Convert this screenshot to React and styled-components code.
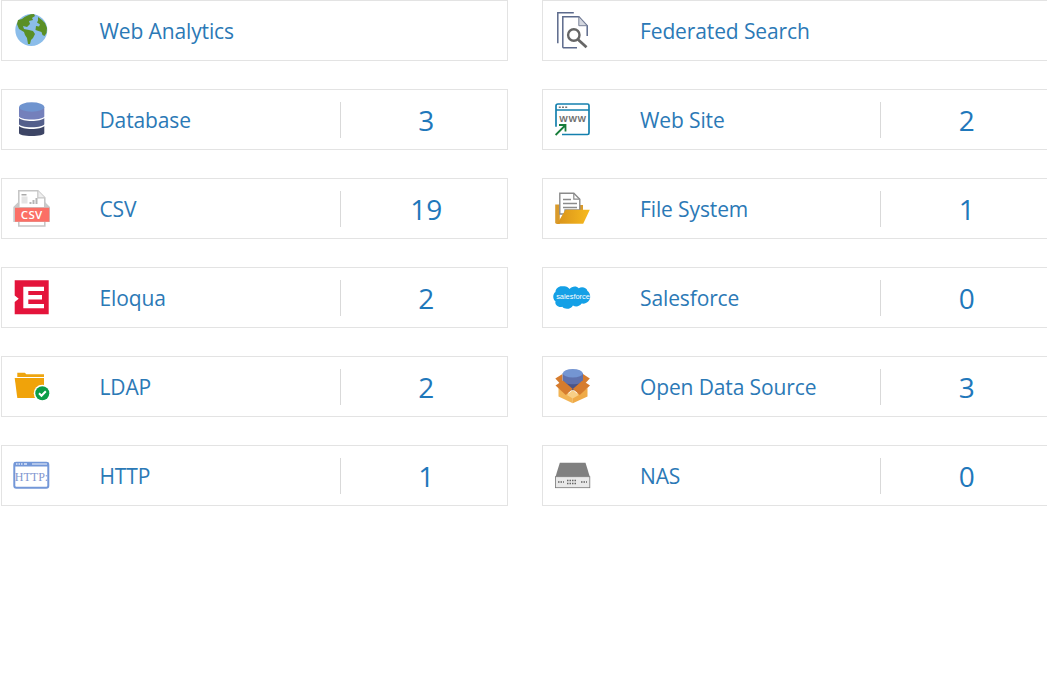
import React from "react";
import styled, { createGlobalStyle } from "styled-components";

const GlobalStyle = createGlobalStyle`
  html, body {
    margin: 0;
    padding: 0;
    height: 100%;
    background: #fff;
    overflow: hidden;
  }
`;

const Page = styled.div`
  width: 1047px;
  height: 700px;
  overflow: hidden;
  font-family: "Open Sans", "Noto Sans", sans-serif;
`;

const Grid = styled.div`
  display: grid;
  grid-template-columns: 507px 507px;
  grid-auto-rows: 61px;
  column-gap: 33.5px;
  row-gap: 28px;
  padding-left: 1px;
  width: 1048px;
`;

const Card = styled.div`
  display: flex;
  align-items: center;
  box-sizing: border-box;
  border: 1px solid #e3e3e3;
  background: #fff;
`;

const IconSlot = styled.div`
  flex: 0 0 97.5px;
  display: flex;
  align-items: center;
  padding-left: 12px;
  box-sizing: border-box;
  height: 100%;
  svg {
    display: block;
    margin-top: -1px;
    overflow: visible;
  }
`;

const Label = styled.div`
  flex: 0 0 240px;
  font-size: 21px;
  letter-spacing: -0.12px;
  color: #2b79b6;
`;

const Count = styled.div`
  flex: 1;
  height: 36px;
  line-height: 36px;
  border-left: 1px solid #d9d9d9;
  text-align: center;
  padding-left: 5px;
  font-size: 28px;
  color: #1f78bb;
`;

const Svg = ({ children }) => (
  <svg width="36" height="36" viewBox="0 0 36 36">
    {children}
  </svg>
);

const Globe = () => (
  <Svg>
    <circle cx="17.300" cy="18" r="16" fill="#8bbdea" />
    <path d="M8 7c3-3 8-5 12-5l1 2-3 2 1 2-4 1 1 3-3 3-4-1 1 3 5 1 4 1 2 3-2 4-2 2-1 4-2 0-1-6-2-3-1-3-5-3-2-5 1-4z" fill="#5a8f25" />
    <path d="M24 5l4 3 3 3 2 5-.5 5-2 3-2-1-1-3-3-1-3-1 .5-4 3 .5 1-2-3-2 1-2z" fill="#5a8f25" />
  </Svg>
);

const Database = () => (
  <Svg>
    <path d="M5 6v9.500c0 1.500 5.500 3 12.700 3s12.600-1.500 12.600-3V6z" fill="#7480bb" />
    <ellipse cx="17.700" cy="6" rx="12.600" ry="4.700" fill="#6f94cf" />
    <path d="M5 17v6c0 1.800 5.500 3.300 12.700 3.300s12.600-1.500 12.600-3.300v-6c-2 1.800-6.500 3-12.600 3S7 18.800 5 17z" fill="#545f8b" />
    <path d="M5 25v7c0 1.800 5.500 3 12.700 3s12.600-1.200 12.600-3v-7c-2 1.800-6.500 3-12.600 3S7 26.800 5 25z" fill="#3d4565" />
  </Svg>
);

const Csv = () => (
  <Svg>
    <path d="M4.800 17V.8h19l7 7V17M4.800 31v5h26v-5" fill="#fff" stroke="#c6c6c6" strokeWidth="1.600" />
    <path d="M23.800.8v7h7" fill="#eee" stroke="#c6c6c6" strokeWidth="1.200" />
    <rect x="7.500" y="4" width="5" height="1.500" fill="#aaa" />
    <rect x="7.500" y="6.500" width="6" height="7" fill="#e4e4e4" />
    <path d="M15.500 14v-2h2v2zm3 0v-4h2v4zm3 0v-6h2v6z" fill="#b5b5b5" />
    <path d="M-.7 17l5-5v5zM36 17l-5-5v5z" fill="#c9c9c9" />
    <path d="M-.7 17H36v15H-.7z" fill="#c9c9c9" />
    <path d="M1 17.700h34.300v14H1z" fill="#fb6f66" />
    <text x="17.700" y="29" textAnchor="middle" fontFamily="Open Sans, sans-serif" fontWeight="600" fontSize="11.500" letterSpacing="0.3" fill="#fff">CSV</text>
  </Svg>
);

const Eloqua = () => (
  <Svg>
    <path d="M.7 1.300h34v34H.7V23l4-3.300-4-3.300z" fill="#e4143b" />
    <path d="M9.300 7.700H30V12H14.300v4H28v4.500H14.300v4.500H30v4.300H9.300z" fill="#fff" />
  </Svg>
);

const FolderCheck = () => (
  <Svg>
    <path d="M3.300 9V4.700h7.500l1.500 1.500H30V9z" fill="#eea50f" />
    <path d="M.7 10H30v20H3.300z" fill="#f0a30a" />
    <circle cx="28.300" cy="25.300" r="8.500" fill="#fff" />
    <circle cx="28.300" cy="25.300" r="7" fill="#0b9d47" />
    <path d="M25 25.300l2.500 2.500 4.300-4.500" fill="none" stroke="#fff" strokeWidth="2" />
  </Svg>
);

const Http = () => (
  <Svg>
    <rect x="0.300" y="5.700" width="34" height="25" rx="2" fill="#fff" stroke="#7397d8" strokeWidth="2" />
    <path d="M0 5.500h34.500v4H0z" fill="#7397d8" />
    <path d="M2 7h1.500M4.500 7H6M7 7h1.500M10 7h3" stroke="#dfe7f7" strokeWidth="1.500" />
    <path d="M18 7h15" stroke="#c6d4f0" strokeWidth="1.500" />
    <text x="17.500" y="23.500" textAnchor="middle" fontFamily="Liberation Serif, serif" fontSize="12" fill="#7f96cf">HTTP:</text>
  </Svg>
);

const Federated = () => (
  <Svg>
    <path d="M18.800.8H2.800v30.500" fill="none" stroke="#5c6a8c" strokeWidth="1.500" />
    <path d="M7.800 35.800V4.700h16l8.400 9V24M7.800 35.800H22" fill="none" stroke="#5c6a8c" strokeWidth="1.500" />
    <path d="M23.800 4.700v9h8.400z" fill="#d4d7df" stroke="#7a8299" strokeWidth="1" />
    <circle cx="18.800" cy="23" r="5.700" fill="#fff" stroke="#666" strokeWidth="2.400" />
    <path d="M23 27.500l8.500 7.800" stroke="#666" strokeWidth="2.800" />
  </Svg>
);

const WebSite = () => (
  <Svg>
    <path d="M1 25.700V5a2 2 0 0 1 2-2h29.500a1.500 1.500 0 0 1 1.500 1.500V32a1.500 1.500 0 0 1-1.500 1.500H7" fill="none" stroke="#1480ae" strokeWidth="1.700" />
    <path d="M1 9h33" stroke="#1480ae" strokeWidth="1.500" />
    <path d="M3.800 6.300h2M7 6.300h2M10.200 6.300h2" stroke="#777" strokeWidth="1.600" />
    <text x="18" y="20.700" textAnchor="middle" fontFamily="Liberation Sans, sans-serif" fontWeight="700" fontSize="9" letterSpacing="0.6" fill="#707070">WWW</text>
    <path d="M.6 34l9.500-9.500M4 24h6.500v6.500" fill="none" stroke="#177d3a" strokeWidth="1.800" />
  </Svg>
);

const FileFolder = () => (
  <Svg>
    <defs>
      <linearGradient id="folderFront" x1="0" x2="1" y1="0" y2="0">
        <stop offset="0" stopColor="#d9931b" />
        <stop offset="1" stopColor="#f7ba1e" />
      </linearGradient>
    </defs>
    <path d="M.2 14.500h4.600V34H2a1.800 1.800 0 0 1-1.800-1.800z" fill="#d99a2b" />
    <path d="M24 15h4v6h-4z" fill="#d99a2b" />
    <path d="M4.800 24V3.200h14l6 6V20H10v4z" fill="#fff" stroke="#8b8b8b" strokeWidth="1.400" />
    <path d="M18.800 3.200v6h6" fill="none" stroke="#8b8b8b" strokeWidth="1.200" />
    <path d="M8 9.500h8M8 13.500h14M8 17.500h14" stroke="#8b8b8b" strokeWidth="1.400" />
    <path d="M10.500 19.700h24.300l-6.600 14H2.200z" fill="url(#folderFront)" />
  </Svg>
);

const Salesforce = () => (
  <Svg>
    <g transform="translate(-0.5 5.500) scale(0.97 0.93)">
      <path d="M15.500 5c2-3 7-4 9.500-1 3-2 8-1 9 3 3 2 4 8 1 11-2 2-4 3-7 2.500-2 3-6 4-9 2-2 4-8 5-11 1.500-4 1-8-2-7-6-3-2-3-8 0-10 0-4 4-7 8-6 2.500-.8 5 1 6.500 2.500z" fill="#14a0e6" />
    </g>
    <text x="18" y="19.500" textAnchor="middle" fontFamily="Liberation Sans, sans-serif" fontSize="7.400" fill="#fff">salesforce</text>
  </Svg>
);

const OpenBox = () => (
  <Svg>
    <path d="M.3 10.500L7.500 6v11.500L4 14.500z" fill="#d67c2e" />
    <path d="M34.800 10.500L28 6v11.500L31 14.500z" fill="#d67c2e" />
    <path d="M7.800 5.300v13c0 2.500 4.500 4 10 4s10-1.500 10-4v-13z" fill="#4a5488" />
    <path d="M7.800 5.300v7c0 2.500 4.500 4 10 4s10-1.500 10-4v-7z" fill="#5f71ad" />
    <ellipse cx="17.800" cy="5.300" rx="10" ry="4.300" fill="#7495d2" />
    <path d="M3.500 20l14.300 8v7.300L3.500 28.500z" fill="#f2b455" />
    <path d="M32.500 20l-14.700 8v7.300l14.700-6.800z" fill="#efaa47" />
    <path d="M.5 17.500L8 12.500l9.800 8.500-7 6z" fill="#d67c2e" />
    <path d="M35 17.500l-7.500-5-9.700 8.500 7 6z" fill="#d67c2e" />
    <path d="M17.800 22l-6 5 6 3.500 6-3.500z" fill="#f8cf86" />
  </Svg>
);

const Nas = () => (
  <Svg>
    <path d="M4.800 5.700h25.700l4.300 14H.5z" fill="#808080" />
    <rect x="0.500" y="19.700" width="34.300" height="11" fill="#e9e9e9" stroke="#777" strokeWidth="0.800" />
    <path d="M3 25h6M12 23.500h10M12 26.500h10M26 25h6" stroke="#666" strokeWidth="1.500" strokeDasharray="1.500 1" />
  </Svg>
);

const sources = [
  { name: "Web Analytics", Icon: Globe },
  { name: "Federated Search", Icon: Federated },
  { name: "Database", Icon: Database, count: 3 },
  { name: "Web Site", Icon: WebSite, count: 2 },
  { name: "CSV", Icon: Csv, count: 19 },
  { name: "File System", Icon: FileFolder, count: 1 },
  { name: "Eloqua", Icon: Eloqua, count: 2 },
  { name: "Salesforce", Icon: Salesforce, count: 0 },
  { name: "LDAP", Icon: FolderCheck, count: 2 },
  { name: "Open Data Source", Icon: OpenBox, count: 3 },
  { name: "HTTP", Icon: Http, count: 1 },
  { name: "NAS", Icon: Nas, count: 0 },
];

const App = () => (
  <Page>
    <GlobalStyle />
    <Grid>
      {sources.map(({ name, Icon, count }) => (
        <Card key={name}>
          <IconSlot>
            <Icon />
          </IconSlot>
          <Label>{name}</Label>
          {count !== undefined && <Count>{count}</Count>}
        </Card>
      ))}
    </Grid>
  </Page>
);

export default App;
